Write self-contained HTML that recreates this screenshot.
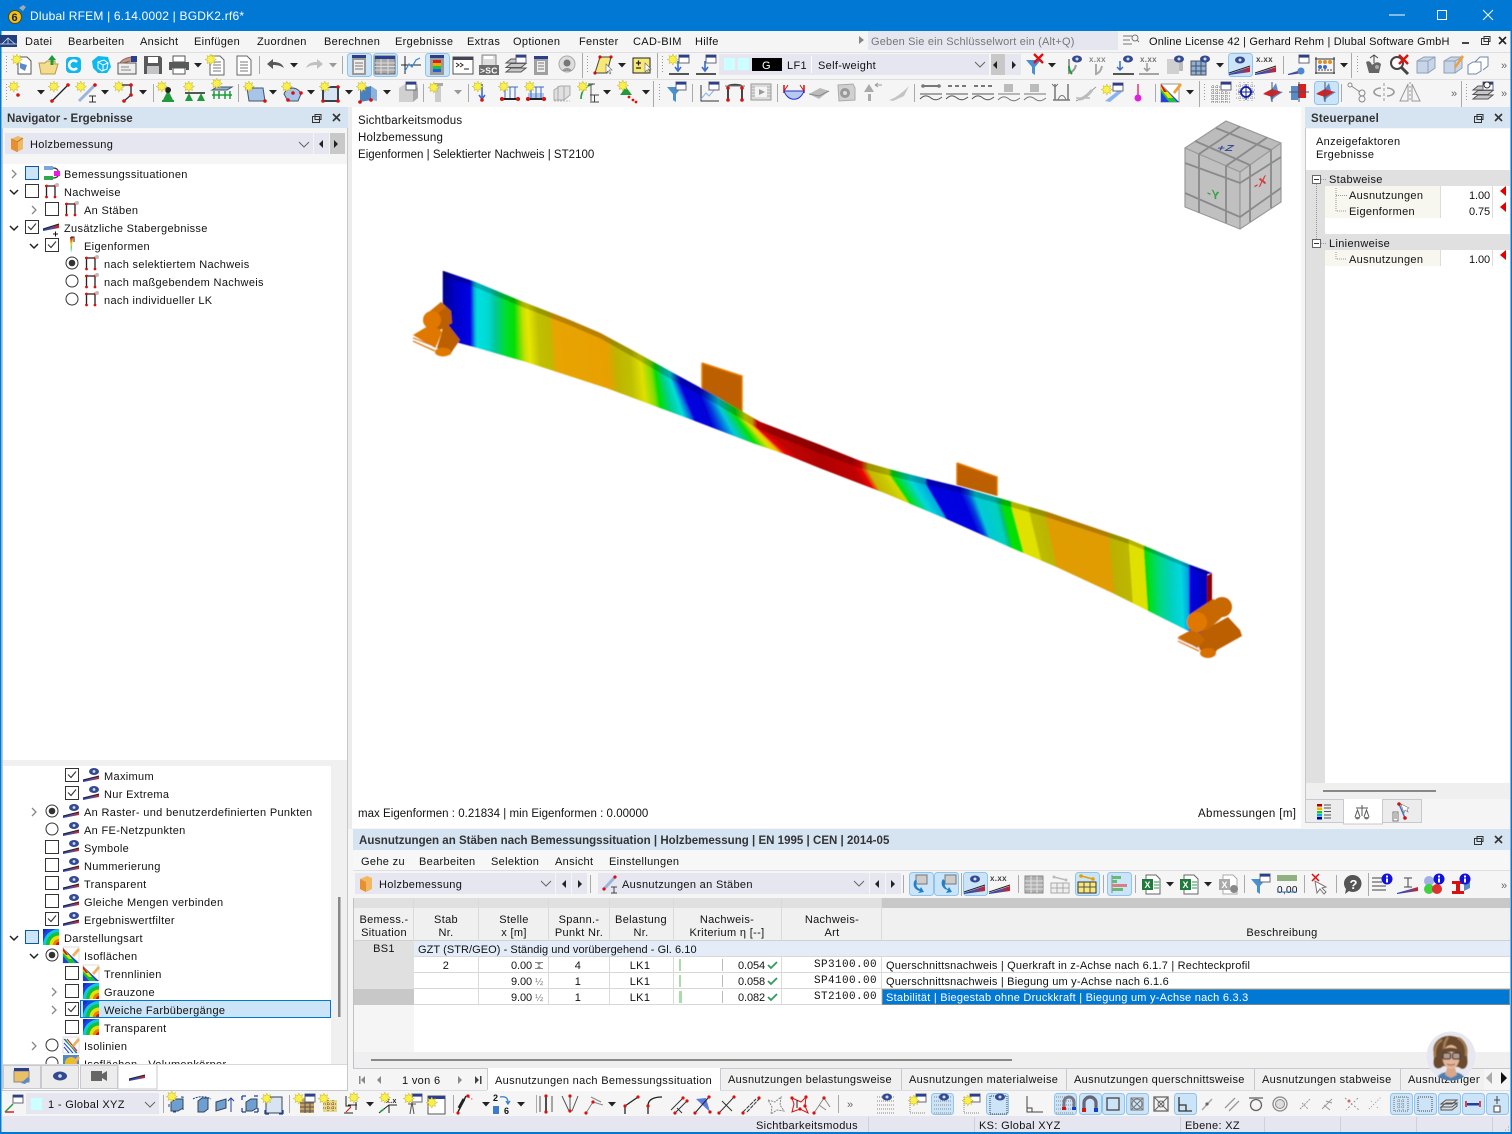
<!DOCTYPE html>
<html lang="de"><head><meta charset="utf-8"><title>Dlubal RFEM</title>
<style>
html,body{margin:0;padding:0;background:#f5f5f5}
#p{position:relative;width:1512px;height:1134px;overflow:hidden;font:11px "Liberation Sans",sans-serif;letter-spacing:.33px;color:#111}
svg.l{position:absolute;left:0;top:0}
i{position:absolute;font-style:normal;white-space:nowrap;line-height:14px;margin-top:1px}
i.c{transform:translateX(-50%)}
i.r{transform:translateX(-100%);letter-spacing:-.1px}
i.h{font-weight:bold;font-size:11.5px;color:#333;letter-spacing:.02px}
i.v{font-size:11.5px;letter-spacing:.05px}
i.m{font-family:"Liberation Mono",monospace;letter-spacing:.4px;font-size:11px}
svg text{font-family:"Liberation Sans",sans-serif}
</style></head><body><div id="p">
<svg class="l" width="1512" height="1134">
<rect width="1512" height="1134" fill="#f5f5f5"/>
<rect width="1512" height="31" fill="#0078d4"/>
<rect x="0" y="52" width="1512" height="1" fill="#dfdfdf"/><rect x="0" y="79" width="1512" height="1" fill="#dfdfdf"/>
<rect x="868" y="31" width="250" height="19" fill="#e6e6f0"/>
<rect x="719" y="54" width="270" height="21" fill="#e6e6f0"/>
<rect x="724" y="58" width="11" height="12" fill="#ccffff"/><rect x="738" y="58" width="11" height="12" fill="#ccffff"/><rect x="752" y="58" width="30" height="13" fill="#000"/>
<rect x="811" y="56" width="1" height="17" fill="#fff"/>
<rect x="991" y="54" width="14" height="21" fill="#c8c8c8"/><rect x="1005" y="54" width="16" height="21" fill="#e6e6f0"/>
<!-- nav -->
<rect x="348" y="107" width="4" height="722" fill="#ececec"/>
<rect x="2" y="107" width="346" height="21" fill="#d6e4f2"/>
<rect x="2" y="128" width="346" height="36" fill="#f5f5f5"/>
<rect x="5" y="133" width="308" height="21" fill="#e6e6f0"/><rect x="314" y="133" width="15" height="21" fill="#e6e6f0"/><rect x="330" y="133" width="15" height="21" fill="#c8c8c8"/>
<rect x="3" y="164" width="344" height="596" fill="#fff"/>
<rect x="2" y="128" width="1" height="962" fill="#c6c6cc"/><rect x="347" y="128" width="1" height="962" fill="#c6c6cc"/>
<rect x="3" y="760" width="344" height="6" fill="#f0f0f0"/>
<rect x="3" y="766" width="328" height="298" fill="#fff"/><rect x="331" y="766" width="16" height="298" fill="#f0f0f0"/>
<rect x="338" y="897" width="2.5" height="120" fill="#888"/>
<rect x="80.5" y="1000.5" width="250" height="17" fill="#cce4f7" stroke="#0078d4"/>
<rect x="2" y="1090" width="346" height="1" fill="#c6c6cc"/>
<rect x="353" y="1090" width="1157" height="1" fill="#dcdce0"/>
<!-- viewport -->
<rect x="352" y="107" width="949" height="721" fill="#fff"/>
<!-- steuerpanel -->
<rect x="1305" y="107" width="205" height="21" fill="#d6e4f2"/>
<rect x="1305" y="129" width="205" height="654" fill="#fff"/>
<rect x="1305" y="128" width="1" height="695" fill="#c6c6cc"/>
<rect x="1306" y="170" width="19" height="613" fill="#e0e0e0"/>
<rect x="1306" y="170" width="204" height="16" fill="#e0e0e0"/>
<rect x="1325" y="186" width="116" height="32" fill="#f7f7f0"/><rect x="1440" y="186" width="1" height="32" fill="#ddd"/><rect x="1492" y="186" width="1" height="32" fill="#ddd"/>
<rect x="1306" y="234" width="204" height="16" fill="#e0e0e0"/>
<rect x="1325" y="250" width="116" height="16" fill="#f7f7f0"/><rect x="1440" y="250" width="1" height="16" fill="#ddd"/><rect x="1492" y="250" width="1" height="16" fill="#ddd"/>
<rect x="1306" y="783" width="204" height="16" fill="#efefef"/>
<rect x="1323" y="790" width="113" height="2" fill="#888"/>
<!-- results -->
<rect x="353" y="829" width="1157" height="21" fill="#d6e4f2"/>
<rect x="353" y="850" width="1157" height="20" fill="#f7f7f7"/>
<rect x="353" y="870" width="1157" height="1" fill="#dfdfdf"/>
<rect x="355" y="873" width="200" height="21" fill="#e6e6f0"/><rect x="556" y="873" width="15" height="21" fill="#e6e6f0"/><rect x="572" y="873" width="15" height="21" fill="#e6e6f0"/>
<rect x="598" y="873" width="271" height="21" fill="#e6e6f0"/><rect x="870" y="873" width="15" height="21" fill="#e6e6f0"/><rect x="886" y="873" width="15" height="21" fill="#e6e6f0"/>
<rect x="354" y="898" width="1156" height="154" fill="#fff"/>
<rect x="354" y="898" width="1156" height="10" fill="#e0e0e0"/><rect x="882" y="898" width="628" height="10" fill="#c8c8c8"/>
<rect x="354" y="908" width="1156" height="33" fill="#f0f0f0"/>
<rect x="354" y="941" width="60" height="64" fill="#e0e0e0"/><rect x="354" y="989" width="60" height="16" fill="#c8c8c8"/>
<rect x="354" y="1005" width="60" height="47" fill="#f5f5f5"/>
<rect x="414" y="941" width="1096" height="16" fill="#e4ecf8"/>
<rect x="354" y="940" width="1156" height="1" fill="#d0d0d0"/>
<rect x="414" y="956" width="1096" height="1" fill="#d8d8d8"/><rect x="414" y="972" width="1096" height="1" fill="#d8d8d8"/><rect x="414" y="988" width="1096" height="1" fill="#d8d8d8"/><rect x="414" y="1004" width="1096" height="1" fill="#d8d8d8"/>
<g fill="#dadada"><rect x="413" y="898" width="1" height="43"/><rect x="478" y="898" width="1" height="43"/><rect x="548" y="898" width="1" height="43"/><rect x="609" y="898" width="1" height="43"/><rect x="673" y="898" width="1" height="43"/><rect x="781" y="898" width="1" height="43"/><rect x="881" y="898" width="1" height="43"/>
<rect x="478" y="957" width="1" height="48"/><rect x="548" y="957" width="1" height="48"/><rect x="609" y="957" width="1" height="48"/><rect x="673" y="957" width="1" height="48"/><rect x="781" y="957" width="1" height="48"/><rect x="881" y="957" width="1" height="48"/></g>
<g fill="#bbb"><rect x="722" y="959" width="1" height="12"/><rect x="722" y="975" width="1" height="12"/><rect x="722" y="991" width="1" height="12"/></g>
<g fill="#a8dca8"><rect x="679" y="959" width="2" height="12"/><rect x="679" y="975" width="2" height="12"/><rect x="679" y="991" width="3" height="12"/></g>
<rect x="882" y="989" width="628" height="16" fill="#0078d4"/>
<rect x="882.5" y="989.5" width="627" height="15" fill="none" stroke="#e8a050" stroke-dasharray="1 1"/>
<rect x="354" y="1052" width="1156" height="16" fill="#efefef"/>
<rect x="371" y="1059" width="641" height="2" fill="#888"/>
<rect x="353" y="898" width="1" height="170" fill="#c0c0c6"/>
<rect x="353" y="1068" width="1157" height="1" fill="#c8c8d0"/>
<!-- tabs -->
<rect x="487" y="1068" width="233" height="23" fill="#fff"/>
<rect x="720" y="1069" width="181" height="21" fill="#f0f0f0"/><rect x="901" y="1069" width="165" height="21" fill="#f0f0f0"/><rect x="1066" y="1069" width="188" height="21" fill="#f0f0f0"/><rect x="1254" y="1069" width="146" height="21" fill="#f0f0f0"/><rect x="1400" y="1069" width="84" height="21" fill="#f0f0f0"/>
<g fill="#c8c8d0"><rect x="487" y="1068" width="1" height="22"/><rect x="720" y="1068" width="1" height="22"/><rect x="901" y="1068" width="1" height="22"/><rect x="1066" y="1068" width="1" height="22"/><rect x="1254" y="1068" width="1" height="22"/><rect x="1400" y="1068" width="1" height="22"/></g>
<!-- bottom -->
<rect x="26" y="1093" width="133" height="21" fill="#e6e6f0"/><rect x="31" y="1098" width="11" height="12" fill="#ccffff"/>
<rect x="2" y="1116" width="1508" height="16" fill="#e6e6f0"/>
<g fill="#d0d0d8"><rect x="868" y="1117" width="1" height="15"/><rect x="974" y="1117" width="1" height="15"/><rect x="1180" y="1117" width="1" height="15"/><rect x="1264" y="1117" width="1" height="15"/><rect x="1340" y="1117" width="1" height="15"/><rect x="1416" y="1117" width="1" height="15"/><rect x="1492" y="1117" width="1" height="15"/></g>
<rect x="0" y="31" width="1.5" height="1103" fill="#0078d4"/><rect x="1510.5" y="31" width="1.5" height="1103" fill="#0078d4"/><rect x="0" y="1132" width="1512" height="2" fill="#0078d4"/>
</svg>

<i style="left:30px;top:8px;color:#fff;font-size:12px;letter-spacing:.2px">Dlubal RFEM | 6.14.0002 | BGDK2.rf6*</i>
<i style="left:25px;top:34px">Datei</i><i style="left:68px;top:34px">Bearbeiten</i><i style="left:140px;top:34px">Ansicht</i><i style="left:194px;top:34px">Einfügen</i><i style="left:257px;top:34px">Zuordnen</i><i style="left:324px;top:34px">Berechnen</i><i style="left:395px;top:34px">Ergebnisse</i><i style="left:467px;top:34px">Extras</i><i style="left:513px;top:34px">Optionen</i><i style="left:579px;top:34px">Fenster</i><i style="left:633px;top:34px">CAD-BIM</i><i style="left:695px;top:34px">Hilfe</i>
<i style="left:871px;top:34px;color:#777;letter-spacing:.18px">Geben Sie ein Schlüsselwort ein (Alt+Q)</i>
<i style="left:1149px;top:34px;letter-spacing:.17px">Online License 42 | Gerhard Rehm | Dlubal Software GmbH</i>
<i style="left:787px;top:58px">LF1</i><i style="left:818px;top:58px">Self-weight</i>
<i style="left:7px;top:111px" class="h">Navigator - Ergebnisse</i>
<i style="left:30px;top:137px">Holzbemessung</i>
<i style="left:64px;top:167px">Bemessungssituationen</i>
<i style="left:64px;top:185px">Nachweise</i>
<i style="left:84px;top:203px">An Stäben</i>
<i style="left:64px;top:221px">Zusätzliche Stabergebnisse</i>
<i style="left:84px;top:239px">Eigenformen</i>
<i style="left:104px;top:257px">nach selektiertem Nachweis</i>
<i style="left:104px;top:275px">nach maßgebendem Nachweis</i>
<i style="left:104px;top:293px">nach individueller LK</i>
<i style="left:104px;top:769px">Maximum</i>
<i style="left:104px;top:787px">Nur Extrema</i>
<i style="left:84px;top:805px">An Raster- und benutzerdefinierten Punkten</i>
<i style="left:84px;top:823px">An FE-Netzpunkten</i>
<i style="left:84px;top:841px">Symbole</i>
<i style="left:84px;top:859px">Nummerierung</i>
<i style="left:84px;top:877px">Transparent</i>
<i style="left:84px;top:895px">Gleiche Mengen verbinden</i>
<i style="left:84px;top:913px">Ergebniswertfilter</i>
<i style="left:64px;top:931px">Darstellungsart</i>
<i style="left:84px;top:949px">Isoflächen</i>
<i style="left:104px;top:967px">Trennlinien</i>
<i style="left:104px;top:985px">Grauzone</i>
<i style="left:104px;top:1003px">Weiche Farbübergänge</i>
<i style="left:104px;top:1021px">Transparent</i>
<i style="left:84px;top:1039px">Isolinien</i>
<i style="left:84px;top:1057px">Isoflächen - Volumenkörper</i>
<i style="left:48px;top:1097px">1 - Global XYZ</i>

<i class="v" style="left:358px;top:113px;letter-spacing:.22px">Sichtbarkeitsmodus</i>
<i class="v" style="left:358px;top:130px;letter-spacing:.2px">Holzbemessung</i>
<i class="v" style="left:358px;top:147px;letter-spacing:.02px">Eigenformen | Selektierter Nachweis | ST2100</i>
<i class="v" style="left:358px;top:806px;letter-spacing:.03px">max Eigenformen : 0.21834 | min Eigenformen : 0.00000</i>
<i class="v" style="left:1198px;top:806px;letter-spacing:.38px">Abmessungen [m]</i>

<i style="left:1311px;top:111px;letter-spacing:.2px" class="h">Steuerpanel</i>
<i style="left:1316px;top:134px">Anzeigefaktoren</i><i style="left:1316px;top:147px">Ergebnisse</i>
<i style="left:1329px;top:172px">Stabweise</i>
<i style="left:1349px;top:188px">Ausnutzungen</i><i class="r" style="left:1490px;top:188px">1.00</i>
<i style="left:1349px;top:204px">Eigenformen</i><i class="r" style="left:1490px;top:204px">0.75</i>
<i style="left:1329px;top:236px">Linienweise</i>
<i style="left:1349px;top:252px">Ausnutzungen</i><i class="r" style="left:1490px;top:252px">1.00</i>

<i style="left:359px;top:833px" class="h">Ausnutzungen an Stäben nach Bemessungssituation | Holzbemessung | EN 1995 | CEN | 2014-05</i>
<i style="left:361px;top:854px">Gehe zu</i><i style="left:419px;top:854px">Bearbeiten</i><i style="left:491px;top:854px">Selektion</i><i style="left:555px;top:854px">Ansicht</i><i style="left:609px;top:854px">Einstellungen</i>
<i style="left:379px;top:877px">Holzbemessung</i><i style="left:622px;top:877px">Ausnutzungen an Stäben</i>

<i class="c" style="left:384px;top:912px">Bemess.-</i><i class="c" style="left:384px;top:925px">Situation</i>
<i class="c" style="left:446px;top:912px">Stab</i><i class="c" style="left:446px;top:925px">Nr.</i>
<i class="c" style="left:514px;top:912px">Stelle</i><i class="c" style="left:514px;top:925px">x [m]</i>
<i class="c" style="left:579px;top:912px">Spann.-</i><i class="c" style="left:579px;top:925px">Punkt Nr.</i>
<i class="c" style="left:641px;top:912px">Belastung</i><i class="c" style="left:641px;top:925px">Nr.</i>
<i class="c" style="left:727px;top:912px">Nachweis-</i><i class="c" style="left:727px;top:925px">Kriterium η [--]</i>
<i class="c" style="left:832px;top:912px">Nachweis-</i><i class="c" style="left:832px;top:925px">Art</i>
<i class="c" style="left:1282px;top:925px">Beschreibung</i>
<i class="c" style="left:384px;top:941px">BS1</i>
<i style="left:418px;top:942px;letter-spacing:.06px">GZT (STR/GEO) - Ständig und vorübergehend - Gl. 6.10</i>
<i class="c" style="left:446px;top:958px">2</i><i class="r" style="left:532px;top:958px">0.00</i><i class="c" style="left:578px;top:958px">4</i><i class="c" style="left:640px;top:958px">LK1</i><i class="r" style="left:765px;top:958px">0.054</i><i class="r m" style="left:877px;top:957px">SP3100.00</i><i style="left:886px;top:958px;letter-spacing:.2px">Querschnittsnachweis | Querkraft in z-Achse nach 6.1.7 | Rechteckprofil</i>
<i class="r" style="left:532px;top:974px">9.00</i><i class="c" style="left:578px;top:974px">1</i><i class="c" style="left:640px;top:974px">LK1</i><i class="r" style="left:765px;top:974px">0.058</i><i class="r m" style="left:877px;top:973px">SP4100.00</i><i style="left:886px;top:974px;letter-spacing:.2px">Querschnittsnachweis | Biegung um y-Achse nach 6.1.6</i>
<i class="r" style="left:532px;top:990px">9.00</i><i class="c" style="left:578px;top:990px">1</i><i class="c" style="left:640px;top:990px">LK1</i><i class="r" style="left:765px;top:990px">0.082</i><i class="r m" style="left:877px;top:989px">ST2100.00</i><i style="left:886px;top:990px;color:#fff;letter-spacing:.24px">Stabilität | Biegestab ohne Druckkraft | Biegung um y-Achse nach 6.3.3</i>
<i style="left:402px;top:1073px">1 von 6</i>
<i style="left:495px;top:1073px">Ausnutzungen nach Bemessungssituation</i>
<i style="left:728px;top:1072px">Ausnutzungen belastungsweise</i>
<i style="left:909px;top:1072px">Ausnutzungen materialweise</i>
<i style="left:1074px;top:1072px">Ausnutzungen querschnittsweise</i>
<i style="left:1262px;top:1072px">Ausnutzungen stabweise</i>
<i style="left:1408px;top:1072px;width:72px;overflow:hidden">Ausnutzungen stab</i>
<i style="left:756px;top:1118px">Sichtbarkeitsmodus</i><i style="left:979px;top:1118px">KS: Global XYZ</i><i style="left:1185px;top:1118px">Ebene: XZ</i>

<svg class="l" width="1512" height="1134">
<defs>
<linearGradient id="wg"><stop offset="0" stop-color="#1f3fae"/><stop offset=".55" stop-color="#5a4a9a"/><stop offset="1" stop-color="#d02020"/></linearGradient>
<linearGradient id="rbw" x1="0" y1="1" x2="0" y2="0"><stop offset="0" stop-color="#1060e0"/><stop offset=".3" stop-color="#10c060"/><stop offset=".55" stop-color="#e8e000"/><stop offset=".8" stop-color="#e07000"/><stop offset="1" stop-color="#d01010"/></linearGradient>
<filter id="sf1"><feGaussianBlur stdDeviation=".45"/></filter>
<g id="ar"><path d="M7 9h8l-4 4.500z" fill="#222"/></g>
<g id="ag"><path d="M7 9h8l-4 4.500z" fill="#999"/></g>
<g id="st" transform="scale(.8)"><path d="M6 0l1.400 3.200 3.400-1.200-1.200 3.400L13 7 9.600 8.400l1.200 3.400-3.400-1.200L6 14l-1.400-3.400L1.200 11.800l1.200-3.400L-1 7l3.400-1.600L1.200 2l3.400 1.200z" fill="#faf04a" stroke="#bfae30" stroke-width=".6"/></g>
<g id="wn"><rect x="11" y="1" width="10" height="8" fill="#fff" stroke="#667"/><rect x="11" y="1" width="10" height="2.600" fill="#2b3f8c"/></g>
<g id="ey"><ellipse cx="15" cy="5" rx="5" ry="3.500" fill="#34498f"/><circle cx="15" cy="5" r="1.500" fill="#cfe0ff"/></g>
<g id="nd"><path d="M6 3h9l4 4v13H6z" fill="#fff" stroke="#555"/><path d="M8 9l7 2-2 6-5-3z" fill="#5a8ac8"/><use href="#st"/></g>
<g id="fo"><path d="M1 9h6l2-2h8v3h3l-3 10H3z" fill="#f5dc8c" stroke="#b09a50"/><path d="M14 1l4 5h-2.500v5h-3V6H10z" fill="#1f9a3c"/></g>
<g id="cc"><rect x="3" y="3" width="15" height="16" rx="4" fill="#10b8ee"/><path d="M14 8a4.500 4.500 0 1 0 0 6" fill="none" stroke="#fff" stroke-width="2.600"/></g>
<g id="cb"><path d="M2 7l6-5 10 1 3 10-4 6H8l-5-5z" fill="#10b8ee"/><path d="M8 8l6-2 4 3-1 6-5 2-4-3zM8 8l5 3 5-2M13 11v6" fill="none" stroke="#fff"/></g>
<g id="hb"><rect x="2" y="9" width="18" height="11" fill="#eee" stroke="#555"/><path d="M5 13h8M5 16h10" stroke="#888"/><path d="M4 9c2-4 7-5 11-6l1 4c-4 0-7 2-9 2z" fill="#c89878" stroke="#866"/><rect x="15" y="2" width="6" height="6" fill="#2b3f8c"/></g>
<g id="fl"><path d="M2 2h16l2 2v16H2z" fill="#58595b"/><rect x="6" y="3" width="10" height="6" fill="#fff"/><rect x="5" y="12" width="12" height="8" fill="#c4c4c4"/></g>
<g id="pt"><rect x="5" y="2" width="12" height="6" fill="#fff" stroke="#555"/><path d="M1 8h20v8h-3v-2H4v2H1z" fill="#58595b"/><rect x="5" y="14" width="12" height="6" fill="#fff" stroke="#555"/></g>
<g id="dc"><path d="M4 2h10l4 4v15H4z" fill="#fff" stroke="#666"/><path d="M7 8h8M7 11h8M7 14h8M7 17h8" stroke="#777"/></g>
<g id="ds"><use href="#dc"/><use href="#st"/></g>
<g id="un"><path d="M3 10l6-5v3c5 0 9 1 11 6-3-2-6-3-11-3v4z" fill="#58595b"/></g>
<g id="re"><path d="M19 10l-6-5v3c-5 0-9 1-11 6 3-2 6-3 11-3v4z" fill="#c0c0c0"/></g>
<g id="tl"><rect x="4" y="1" width="14" height="20" fill="#9a9a9a"/><rect x="4" y="1" width="14" height="3" fill="#2b3f8c"/><rect x="6" y="6" width="10" height="13" fill="#eee"/><path d="M7 9h8M7 12h8M7 15h8" stroke="#777"/></g>
<g id="tg"><rect x="1" y="2" width="20" height="18" fill="#a8a8a8" stroke="#666"/><rect x="1" y="2" width="20" height="3" fill="#2b3f8c"/><path d="M1 9h20M1 12.500h20M1 16h20M7 5v15M14 5v15" stroke="#ddd"/></g>
<g id="ch"><path d="M5 2v18M1 11h20" stroke="#222" fill="none"/><path d="M5 17l4-7 3 3 4-7 4-2" stroke="#3a86d0" stroke-width="1.200" fill="none"/></g>
<g id="tc"><rect x="4" y="1" width="14" height="20" fill="#9a9a9a"/><rect x="4" y="1" width="14" height="3" fill="#2b3f8c"/><rect x="7" y="6" width="8" height="3" fill="#d82020"/><rect x="7" y="9" width="8" height="3" fill="#e8b000"/><rect x="7" y="12" width="8" height="3" fill="#20c040"/><rect x="7" y="15" width="8" height="3" fill="#2060e0"/></g>
<g id="co"><rect x="1" y="3" width="20" height="17" fill="#fff" stroke="#555"/><rect x="1" y="3" width="20" height="3" fill="#445"/><path d="M4 9l3 2-3 2M8 9l3 2-3 2M12 15h5" stroke="#222" fill="none"/></g>
<g id="sc"><rect x="4" y="1" width="14" height="11" fill="#ddd" stroke="#888"/><rect x="6" y="2" width="9" height="3" fill="#fff"/><rect x="1" y="11" width="20" height="10" fill="#6c6c6c"/><text x="2" y="19.500" font-size="8.500" font-weight="bold" fill="#fff">&gt;SC</text></g>
<g id="ly"><path d="M1 18l5-4h15l-5 4zM1 13.500l5-4h15l-5 4zM1 9l5-4h5v4z" fill="#c8c8c8" stroke="#555"/><use href="#wn"/></g>
<g id="dl"><rect x="4" y="2" width="14" height="19" fill="#a0a0a0"/><rect x="4" y="2" width="14" height="3" fill="#2b3f8c"/><rect x="7" y="7" width="8" height="11" fill="#eee"/><path d="M8 9h6M8 12h6M8 15h6" stroke="#777"/></g>
<g id="hd"><circle cx="11" cy="10" r="8" fill="#ddd" stroke="#aaa"/><circle cx="11" cy="9" r="3.500" fill="#777"/><path d="M6 17c2-4 8-4 10 0" fill="#999"/></g>
<g id="yp"><path d="M7 3h11l-4 16H2z" fill="#f8e878" stroke="#444"/><circle cx="7" cy="3" r="1.600" fill="#d01010"/><circle cx="18" cy="3" r="1.600" fill="#d01010"/><circle cx="2" cy="19" r="1.600" fill="#d01010"/><path d="M13 10v9l2-2 2 3 1-1-2-3h3z" fill="#fff" stroke="#666" stroke-width=".6"/></g>
<g id="yb"><rect x="2" y="4" width="17" height="15" fill="#f8e878" stroke="#222"/><path d="M5 9h5M7.500 6.500v5M5 14h5" stroke="#222" stroke-width="1.300"/><path d="M14 9v9l2-2 2 3 1-1-2-3h3z" fill="#fff" stroke="#666" stroke-width=".6"/></g>
<g id="lb"><use href="#wn"/><path d="M10 7v10M7 13l3 4 3-4" stroke="#3a6cc8" stroke-width="1.600" fill="none"/><path d="M1 20h20" stroke="#222" stroke-width="1.600"/></g>
<g id="la"><use href="#lb"/><use href="#st"/></g>
<g id="fn"><path d="M2 6h15l-6 7v8l-3-2v-6z" fill="#4a90d0"/></g>
<g id="fw"><use href="#fn"/><use href="#wn"/></g>
<g id="fx"><use href="#fn"/><path d="M10 0l9 9M19 0l-9 9" stroke="#e01010" stroke-width="2.400"/></g>
<g id="ge"><use href="#ey"/><path d="M7 5v14c3-1 6-3 7-8" fill="none" stroke="#999" stroke-width="2"/><path d="M7 12c0 5 2 7 3 8" fill="none" stroke="#1f9a3c" stroke-width="2"/></g>
<g id="gx"><text x="1" y="8" font-size="8" font-weight="bold" fill="#888">x.xx</text><path d="M8 10v10c3-1 5-3 6-8" fill="none" stroke="#aaa" stroke-width="2"/></g>
<g id="eb"><use href="#ey"/><path d="M7 7v9M4 13l3 3 3-3" stroke="#3a6cc8" stroke-width="1.500" fill="none"/><path d="M0 20h21" stroke="#222" stroke-width="1.600"/></g>
<g id="xb"><text x="1" y="8" font-size="8" font-weight="bold" fill="#777">x.xx</text><path d="M8 9v8M5 14l3 3 3-3" stroke="#999" stroke-width="1.500" fill="none"/><path d="M0 20h20" stroke="#888" stroke-width="1.600"/></g>
<g id="gc"><path d="M3 5h12v15H3z" fill="#d0d0d0"/><path d="M15 5h4v12h-4z" fill="#bbb"/><use href="#ey"/></g>
<g id="tb"><rect x="1" y="7" width="15" height="14" fill="#8fb0d8" stroke="#555"/><path d="M1 12h15M1 17h15M6 7v14M11 7v14" stroke="#456"/><use href="#ey"/></g>
<g id="rb"><path d="M0 20l21-7v5L0 21z" fill="url(#wg)"/><path d="M0 19l21-7" stroke="#222"/><use href="#ey" transform="translate(-4 1)"/></g>
<g id="xw"><text x="1" y="8" font-size="8" font-weight="bold" fill="#444">x.xx</text><path d="M0 20l21-7v5L0 21z" fill="url(#wg)"/><path d="M0 19l21-7" stroke="#222"/></g>
<g id="wg2"><path d="M0 20l16-5v4L0 21z" fill="url(#wg)"/><use href="#wn"/><circle cx="13" cy="17" r="3.500" fill="#4a8ad0"/></g>
<g id="ab"><path d="M1 5h20M1 19h20M2 3v17M20 3v17" stroke="#333" fill="none"/><g fill="#e09020"><circle cx="6" cy="8" r="2"/><circle cx="11" cy="8" r="2"/><circle cx="16" cy="8" r="2"/></g><g fill="#3a6cc8"><circle cx="6" cy="13" r="2"/><circle cx="11" cy="13" r="2"/></g><path d="M4 16h14" stroke="#444" stroke-dasharray="2 1"/></g>
<g id="hs"><path d="M3 8c3-2 5 0 6 3 3-3 6-4 9-1l-2 9H6z" fill="#666"/><path d="M11 1v8M7 4l4-3 4 3" fill="none" stroke="#444"/><circle cx="14" cy="13" r="2" fill="#aaa"/></g>
<g id="mx"><circle cx="8" cy="9" r="6" fill="#fff" stroke="#444" stroke-width="2"/><path d="M12 13l7 7" stroke="#444" stroke-width="3"/><path d="M10 1l9 9M19 1l-9 9" stroke="#e01010" stroke-width="2.400"/></g>
<g id="cu"><path d="M2 7l7-4h11v11l-7 5H2z" fill="#c8d4e8" stroke="#8fa0b8"/><path d="M2 7h11v12M13 7l7-4" fill="none" stroke="#8fa0b8"/></g>
<g id="cp"><use href="#cu"/><path d="M12 13L20 1l2 2-8 11z" fill="#f0a030"/></g>
<g id="c2"><path d="M1 11l5-3h8v9l-5 3H1zM8 8l5-5h8v9l-5 4" fill="#fff" stroke="#7088a8"/></g>
<!-- row2 -->
<g id="rd1"><circle cx="9" cy="14" r="1.800" fill="#d81010"/><use href="#st"/></g>
<g id="sl"><path d="M3 20L19 4" stroke="#222" stroke-width="1.300"/><circle cx="3" cy="20" r="1.800" fill="#d81010"/><circle cx="19" cy="4" r="1.800" fill="#d81010"/><use href="#st"/></g>
<g id="si"><path d="M3 20L19 4" stroke="#9db4dc" stroke-width="3"/><circle cx="19" cy="4" r="1.800" fill="#d81010"/><path d="M13 15h7M16.500 15v6M13 21h7" stroke="#333"/><use href="#st"/></g>
<g id="sp"><path d="M6 4h11v10l-7 6" fill="none" stroke="#222" stroke-width="1.300"/><circle cx="17" cy="4" r="1.800" fill="#d81010"/><circle cx="17" cy="14" r="1.800" fill="#d81010"/><circle cx="10" cy="20" r="1.800" fill="#d81010"/><use href="#st"/></g>
<g id="n1"><path d="M11 9l5 10H6z" fill="#1f9a3c"/><circle cx="11" cy="9" r="3" fill="#222"/><rect x="5" y="19" width="12" height="2" fill="#1f9a3c"/><use href="#st"/></g>
<g id="n2"><path d="M1 12h20" stroke="#222" stroke-width="1.500"/><path d="M5 12l4 8H1zM17 12l4 8h-8z" fill="#1f9a3c"/><use href="#st"/></g>
<g id="n3"><path d="M1 9l5-3h15l-5 3z" fill="#8fb0d8" stroke="#456"/><path d="M3 10v8M8 10v8M14 10v8M19 10v8M1 14h20" stroke="#1f9a3c" stroke-width="1.500"/><use href="#st" transform="translate(1 -3)"/></g>
<g id="sq"><path d="M3 7h16l2 13H5z" fill="#a8c4e8" stroke="#456"/><circle cx="21" cy="20" r="1.800" fill="#d81010"/><circle cx="3" cy="7" r="1.800" fill="#d81010"/><use href="#st"/></g>
<g id="sh"><path d="M2 13a9 9 0 0 1 17 0l-3 7H6z" fill="#a8c4e8" stroke="#456"/><circle cx="6" cy="19" r="1.800" fill="#d81010"/><circle cx="19" cy="12" r="1.800" fill="#d81010"/><circle cx="11" cy="12" r="1.800" fill="#d81010"/><use href="#st"/></g>
<g id="sf"><rect x="3" y="6" width="15" height="14" fill="#d8e4f4" stroke="#345" stroke-width="2"/><circle cx="3" cy="6" r="1.800" fill="#d81010"/><circle cx="18" cy="6" r="1.800" fill="#d81010"/><circle cx="3" cy="20" r="1.800" fill="#d81010"/><circle cx="18" cy="20" r="1.800" fill="#d81010"/><use href="#st"/></g>
<g id="sb"><path d="M3 8l11-3v14L3 21z" fill="#4a80c0"/><path d="M14 5l6 4v11l-6-1z" fill="#8fb0d8"/><circle cx="3" cy="21" r="1.800" fill="#d81010"/><circle cx="14" cy="19" r="1.800" fill="#d81010"/><use href="#st"/></g>
<g id="gb"><path d="M2 7l6-4h13v3l-5 3v12H2z" fill="#d0d0d0"/><path d="M16 9v12l5-4V6z" fill="#aaa"/><use href="#wn" transform="translate(-2 0)"/></g>
<g id="gk"><path d="M8 4h6v17H8z" fill="#ccc"/><path d="M6 2h10v3H6z" fill="#aaa"/><use href="#st" transform="translate(2 1)"/></g>
<g id="sk"><path d="M11 3v16M8 14l3 4 3-4" stroke="#3a6cc8" stroke-width="1.600" fill="none"/><circle cx="11" cy="19" r="1.800" fill="#d81010"/><use href="#st" transform="translate(2 0)"/></g>
<g id="fl1"><path d="M1 18h20M3 6h16M6 6v11M11 6v11M16 6v11" stroke="#3a6cc8" fill="none"/><path d="M1 18h20" stroke="#222" stroke-width="2"/><circle cx="3" cy="18" r="2" fill="#d81010"/><circle cx="19" cy="18" r="2" fill="#d81010"/><use href="#st"/></g>
<g id="fl2"><rect x="3" y="12" width="16" height="6" fill="#b0c8e8"/><use href="#fl1"/></g>
<g id="fl3"><path d="M3 9l6-4h10v9l-6 5H3z" fill="#e0e0e0" stroke="#aaa"/><path d="M7 5v14M13 5v14" stroke="#aaa"/><path d="M3 20h16" stroke="#bbb" stroke-dasharray="2 1"/></g>
<g id="gi"><path d="M3 18C3 9 8 5 15 3" fill="none" stroke="#1f9a3c" stroke-width="1.600"/><path d="M13 3v17M10 3h7" stroke="#555"/><path d="M12 14h9M16.500 14v7M12 21h9" stroke="#444"/><use href="#st"/></g>
<g id="gs"><path d="M11 6l6 8H5z" fill="#1f9a3c"/><circle cx="14" cy="16" r="1.400" fill="#d81010"/><circle cx="18" cy="19" r="1.400" fill="#d81010"/><circle cx="21" cy="21" r="1.400" fill="#d81010"/><use href="#st" transform="translate(3 -1)"/></g>
<g id="cw"><path d="M3 4v16h18" stroke="#333" fill="none"/><path d="M3 18l5-6 3 3 6-7" stroke="#8ab4e0" fill="none"/><use href="#wn"/></g>
<g id="rf"><path d="M4 20V6c0-3 14-3 14 0v14" fill="none" stroke="#444" stroke-width="2"/><path d="M1 5h20" stroke="#777"/><circle cx="4" cy="19" r="1.800" fill="#d81010"/><circle cx="18" cy="19" r="1.800" fill="#d81010"/><circle cx="4" cy="7" r="1.800" fill="#d81010"/><circle cx="18" cy="7" r="1.800" fill="#d81010"/></g>
<g id="fm"><rect x="1" y="3" width="20" height="16" fill="#ddd" stroke="#999"/><rect x="5" y="6" width="12" height="10" fill="#f4f4f4"/><path d="M9 8l6 3-6 3z" fill="#999"/><path d="M1 6h4M1 9h4M1 12h4M1 15h4M17 6h4M17 9h4M17 12h4M17 15h4" stroke="#aaa"/></g>
<g id="mm"><path d="M1 4v8M21 4v8" stroke="#d81010" stroke-width="1.500"/><path d="M1 10C5 21 17 21 21 10z" fill="#b8c8ee" stroke="#2030d0"/><path d="M1 10l4-6M21 10l-4-6" stroke="#d81010"/></g>
<g id="gf"><path d="M1 13l11-6 9 3-10 8z" fill="#bbb"/><path d="M1 13l10 2 10-5" fill="none" stroke="#888"/></g>
<g id="gy"><path d="M3 4l15-1 2 4v12l-16 1z" fill="#d0d0d0" stroke="#aaa"/><circle cx="10" cy="12" r="5" fill="#999"/><circle cx="10" cy="12" r="2" fill="#ddd"/></g>
<g id="gu"><path d="M8 3l5 8H3zM7 13h3v7H7z" fill="#aaa"/><path d="M14 4h7M14 4l3-2M14 4l3 2" stroke="#999" fill="none"/></g>
<g id="gl"><path d="M1 19C8 17 15 11 21 5L16 15 5 20z" fill="#c4c4c4"/></g>
<g id="bm"><path d="M2 5h18" stroke="#777" stroke-width="2"/><circle cx="3" cy="5" r="1.800" fill="#777"/><circle cx="19" cy="5" r="1.800" fill="#777"/><path d="M0 13h22M0 18c4-4 7-4 11-1s7 2 11-1" stroke="#555" fill="none"/></g>
<g id="bd"><path d="M2 5h18" stroke="#777" stroke-width="2" stroke-dasharray="4 3"/><path d="M0 13h22M0 18c4-4 7-4 11-1s7 2 11-1" stroke="#555" fill="none"/></g>
<g id="be"><path d="M6 3h9v8H6z" fill="#bbb"/><path d="M0 13h22M0 19c4-4 7-4 11-1s7 2 11-1" stroke="#777" fill="none"/></g>
<g id="bu"><path d="M5 3v16M18 3v16M3 19h17" stroke="#777" stroke-width="1.500" fill="none"/><path d="M8 19c2-6 6-6 8 0" stroke="#777" fill="none"/><path d="M8 3l-3 3-3-3" stroke="#777" fill="none"/></g>
<g id="bg"><path d="M1 20C8 17 15 11 21 6M1 17h14" stroke="#999" fill="none"/><path d="M4 18c5 0 9-4 13-9" stroke="#bbb" stroke-width="3" fill="none"/></g>
<g id="lo"><path d="M3 20L17 9l3 2-12 10z" fill="#8ab4ee"/><use href="#wn" transform="translate(0 1)"/><use href="#st" transform="translate(0 3)"/></g>
<g id="pk"><path d="M11 3v13" stroke="#e83080" stroke-width="1.500"/><circle cx="11" cy="17" r="3.500" fill="#e020e0"/></g>
<g id="rw"><rect x="1" y="3" width="18" height="18" fill="#fff" stroke="#999"/><path d="M1 3l18 18H1z" fill="#2040e0"/><path d="M1 3l16 18h-8L1 11z" fill="#20c040"/><path d="M1 3l12 14H8L1 8z" fill="#f0e000"/><path d="M1 3l6 8H4L1 5z" fill="#e01010"/><path d="M13 11l7-9 2 2-7 9z" fill="#f0a030"/></g>
<g id="gd"><use href="#wn"/><path d="M1 6h9M1 9h9M1 12h20M1 15h20M1 18h20M1 21h20M3 4v18M7 4v18M12 10v12M16 10v12" stroke="#777" stroke-dasharray="1 1"/></g>
<g id="cg"><path d="M1 5h20M1 9h20M1 13h20M1 17h20M5 1v20M9 1v20M13 1v20M17 1v20" stroke="#999" stroke-dasharray="1 1"/><circle cx="11" cy="11" r="5" fill="#fff" stroke="#1020a0" stroke-width="1.800"/><path d="M11 3v16M3 11h16" stroke="#1020a0"/></g>
<g id="pl"><path d="M2 12l8-4 4-6 2 8 5 1-8 5-4 4-1-6z" fill="#5a8ac8"/><path d="M1 13l9-5 9 3-9 5z" fill="#d82020"/><path d="M10 1v20" stroke="#456"/></g>
<g id="pr"><path d="M3 5h7v14H3z" fill="#5a8ac8"/><path d="M10 3h8v14h-8z" fill="#d82020"/><path d="M1 11l20 0M11 1v20" stroke="#456"/></g>
<g id="nl"><path d="M3 4l10 7" stroke="#888"/><circle cx="3" cy="4" r="2" fill="#fff" stroke="#888"/><circle cx="15" cy="12" r="3" fill="none" stroke="#888"/><circle cx="15" cy="18" r="3" fill="none" stroke="#888"/></g>
<g id="rt"><path d="M11 2v18" stroke="#999" stroke-dasharray="3 2"/><path d="M8 7c-4 0-7 2-7 4s3 4 7 4M14 7c4 0 7 2 7 4s-3 4-7 4" fill="none" stroke="#999" stroke-width="1.600"/></g>
<g id="mr"><path d="M9 3v17H1zM13 3v17h8z" fill="none" stroke="#999"/><path d="M11 1v20" stroke="#999" stroke-dasharray="2 2"/></g>
<g id="st3"><use href="#ly"/><circle cx="15" cy="4" r="3" fill="#fff" stroke="#333"/></g>
<!-- results icons -->
<g id="rx1"><rect x="6" y="2" width="11" height="9" fill="#ccc" stroke="#777"/><path d="M5 7c-3 4-1 10 5 11l-2 2 6-1-3-5-1 2c-3-1-5-4-3-8" fill="#1f7fc8"/></g>
<g id="rx2"><rect x="10" y="2" width="11" height="9" fill="#ccc" stroke="#777"/><path d="M8 6c-3 4-1 10 5 11l-2 3 6-1-3-5-1 2c-3-1-4-5-3-8" fill="#1f7fc8"/></g>
<g id="t1"><rect x="2" y="3" width="18" height="17" fill="#b0b0b0" stroke="#888"/><path d="M2 8h18M2 12h18M2 16h18M8 3v17M14 3v17" stroke="#e0e0e0"/></g>
<g id="t2"><rect x="2" y="10" width="18" height="10" fill="#eee" stroke="#aaa"/><path d="M2 15h18M8 10v10M14 10v10" stroke="#aaa"/><path d="M5 4l12 3" stroke="#bbb" stroke-width="1.500"/><circle cx="5" cy="4" r="1.500" fill="#bbb"/><circle cx="17" cy="7" r="1.500" fill="#bbb"/></g>
<g id="t3"><rect x="2" y="9" width="18" height="11" fill="#f8e878" stroke="#333"/><path d="M2 14h18M8 9v11M14 9v11" stroke="#555"/><path d="M5 3l12 3" stroke="#e0a000" stroke-width="1.500"/><circle cx="5" cy="3" r="1.800" fill="#e0a000"/><circle cx="17" cy="6" r="1.800" fill="#e0a000"/></g>
<g id="gn"><path d="M4 2v18" stroke="#888"/><rect x="4" y="3" width="9" height="3" fill="#68b878"/><rect x="4" y="7" width="5" height="3" fill="#68b878"/><rect x="4" y="11" width="15" height="3" fill="#d88080"/><rect x="4" y="15" width="11" height="3" fill="#68b878"/></g>
<g id="xl"><path d="M5 2h10l4 4v15H5z" fill="#fff" stroke="#666"/><rect x="1" y="6" width="11" height="11" fill="#1f7a3c"/><text x="3.500" y="15" font-size="9" font-weight="bold" fill="#fff">X</text><path d="M13 9h5M13 12h5M13 15h5" stroke="#2a9a50"/></g>
<g id="xg"><path d="M5 2h10l4 4v15H5z" fill="#fff" stroke="#aaa"/><rect x="1" y="6" width="11" height="11" fill="#aaa"/><text x="3.500" y="15" font-size="9" font-weight="bold" fill="#fff">X</text><circle cx="16" cy="16" r="4" fill="#888"/></g>
<g id="nu"><text x="1" y="20" font-size="10" fill="#111">0,00</text><rect x="1" y="2" width="20" height="6" fill="#90b080"/><path d="M1 19h20" stroke="#2a70c8"/></g>
<g id="xc"><path d="M6 8l2 12 3-4 4 5 2-2-4-4 4-1z" fill="#fff" stroke="#777"/><path d="M3 1l7 7M10 1L3 8" stroke="#e01010" stroke-width="1.500"/></g>
<g id="qm"><path d="M11 2a8.500 8.500 0 1 1-4 16l-4 3 1-5A8.500 8.500 0 0 1 11 2z" fill="#555"/><text x="7.500" y="16" font-size="13" font-weight="bold" fill="#fff">?</text></g>
<g id="in"><circle cx="16" cy="6" r="5.500" fill="#1010e0"/><rect x="15" y="2.500" width="2" height="2" fill="#fff"/><rect x="15" y="5.500" width="2" height="4" fill="#fff"/></g>
<g id="i1"><path d="M1 5h10M1 9h10M1 13h14M1 17h14" stroke="#444"/><use href="#in"/></g>
<g id="i2"><path d="M0 20l21-6v4L0 21z" fill="url(#wg)"/><path d="M7 5h8M11 5v9M7 14h8" stroke="#444"/></g>
<g id="i3"><circle cx="6" cy="8" r="5" fill="#a0b0e8"/><circle cx="6" cy="16" r="5" fill="#40d040"/><circle cx="14" cy="16" r="5" fill="#e03030"/><use href="#in"/></g>
<g id="i4"><path d="M3 8h12v3H11v7h4v3H3v-3h4v-7H3z" fill="#d81010"/><path d="M15 8l6-3v10l-6 3z" fill="#5a8ac8"/><use href="#in"/></g>
<!-- bottom -->
<g id="ax"><path d="M3 19h9" stroke="#d81010" stroke-width="1.400"/><path d="M3 19l8-8" stroke="#1f9a3c" stroke-width="1.400"/><rect x="11" y="2" width="10" height="8" fill="#fff" stroke="#667"/><rect x="11" y="2" width="10" height="2.500" fill="#2b3f8c"/></g>
<g id="b1"><rect x="3" y="4" width="14" height="15" fill="none" stroke="#2040a0" stroke-dasharray="3 9"/><path d="M5 9l5-3h7v9l-5 3H5z" fill="#6f9ed0" stroke="#345"/><use href="#st" transform="translate(1 -2)"/></g>
<g id="b2"><path d="M7 8l4-3h6v11l-4 3H7z" fill="#6f9ed0" stroke="#345"/><path d="M2 6c5-3 13-3 18 0" fill="none" stroke="#2040a0" stroke-dasharray="2 1"/></g>
<g id="b3"><path d="M2 9l10-3v9L2 18z" fill="#6f9ed0" stroke="#345"/><path d="M17 5v14M14 8l3-3 3 3" stroke="#2040a0" fill="none"/></g>
<g id="b4"><path d="M7 9l5-3h6v9l-5 3H7z" fill="#6f9ed0" stroke="#345"/><path d="M3 3h4M3 3v4M19 3h-4M3 19h4M3 19v-4M19 19h-4M19 19v-4" stroke="#2040a0" fill="none" stroke-width="1.300"/></g>
<g id="b5"><rect x="4" y="4" width="16" height="16" fill="#d8e4f4" stroke="#345"/><path d="M3 3h4M3 3v4M3 21h4M3 21v-4M21 21h-4M21 21v-4" stroke="#2040a0" fill="none" stroke-width="1.300"/><use href="#st"/></g>
<g id="b6"><rect x="6" y="6" width="14" height="14" fill="#c8a060"/><path d="M6 10h14M6 14h14M6 18h14M11 6v14M16 6v14" stroke="#555"/><use href="#wn"/><use href="#st"/></g>
<g id="b7"><rect x="4" y="7" width="14" height="12" fill="#dd8"/><path d="M4 11h14M4 15h14M9 7v12M14 7v12" stroke="#a33" stroke-dasharray="1 1"/><use href="#st"/></g>
<g id="b8"><path d="M3 3v10h5M1 20h9" stroke="#222" fill="none"/><path d="M5 12h9M13 9v8" stroke="#222"/><path d="M3 19l5-5" stroke="#d81010"/><use href="#st" transform="translate(6 -1)"/></g>
<g id="b9"><path d="M3 20l10-8h8M13 12v8" stroke="#222" fill="none"/><path d="M4 19l4-3" stroke="#1f9a3c" stroke-width="1.600"/><text x="10" y="10" font-size="7" font-weight="bold" fill="#222">x.x</text><use href="#st" transform="translate(4 -1)"/></g>
<g id="b10"><path d="M11 9l-2 12M11 9l2 12M7 11l8 0" stroke="#555"/><use href="#wn"/><use href="#st" transform="translate(3 0)"/></g>
<g id="b11"><rect x="3" y="3" width="17" height="18" fill="#fff" stroke="#555"/><rect x="3" y="3" width="17" height="3" fill="#2b3f8c"/><use href="#st" transform="translate(2 4)"/></g>
<g id="b12"><path d="M11 3L3 19" stroke="#222" stroke-width="1.400"/><path d="M11 3l8 4" stroke="#d81010" stroke-dasharray="1 2"/><path d="M9 6l-5 9" stroke="#222" stroke-width="3"/><circle cx="13" cy="3" r="1.600" fill="#d81010"/><circle cx="3" cy="20" r="1.600" fill="#d81010"/></g>
<g id="b13"><text x="1" y="8" font-size="9" font-weight="bold" fill="#111">2</text><rect x="1" y="13" width="6" height="8" fill="#3a7cc8"/><text x="12" y="21" font-size="9" font-weight="bold" fill="#111">6</text><path d="M8 4c6-1 8 1 8 6M14 8l2 3 2-3" stroke="#3a7cc8" fill="none" stroke-width="1.300"/></g>
<g id="l1"><path d="M5 3v16M11 3v16M17 3v16" stroke="#555"/><path d="M11 3v16" stroke="#222" stroke-width="1.600"/><circle cx="11" cy="3" r="1.600" fill="#d81010"/><circle cx="11" cy="19" r="1.600" fill="#d81010"/></g>
<g id="l2"><path d="M3 3l7 15M11 3v15M19 3l-6 15" stroke="#555" fill="none"/><circle cx="11" cy="3" r="1.600" fill="#d81010"/><circle cx="11" cy="18" r="1.600" fill="#d81010"/></g>
<g id="l3"><path d="M3 20L10 9l10 3M8 4l10 5" stroke="#888" fill="none"/><circle cx="3" cy="20" r="1.600" fill="#d81010"/><circle cx="10" cy="9" r="1.600" fill="#d81010"/></g>
<g id="l4"><path d="M4 21v-8M4 13L17 4" stroke="#222" stroke-width="1.300"/><circle cx="17" cy="4" r="1.600" fill="#d81010"/><circle cx="4" cy="13" r="1.600" fill="#d81010"/></g>
<g id="l5"><path d="M4 21v-8C4 7 9 4 18 4" stroke="#222" stroke-width="1.300" fill="none"/><circle cx="4" cy="13" r="1.600" fill="#d81010"/></g>
<g id="l6"><path d="M3 17L15 5M7 20L19 8M9 15l5 5" stroke="#333"/><circle cx="15" cy="5" r="1.600" fill="#d81010"/><circle cx="7" cy="20" r="1.600" fill="#d81010"/><circle cx="19" cy="8" r="1.600" fill="#d81010"/></g>
<g id="l7"><path d="M4 6l14 13-4-14z" fill="#5a7ae0"/><path d="M3 20L17 4" stroke="#222"/><circle cx="17" cy="4" r="1.600" fill="#d81010"/><circle cx="3" cy="20" r="1.600" fill="#d81010"/><circle cx="18" cy="19" r="1.600" fill="#d81010"/></g>
<g id="l8"><path d="M3 20L18 4M6 8l10 10" stroke="#333"/><circle cx="18" cy="4" r="1.600" fill="#d81010"/><circle cx="3" cy="20" r="1.600" fill="#d81010"/></g>
<g id="l9"><path d="M3 19L16 6M7 19L19 6" stroke="#333" stroke-dasharray="4 1"/><circle cx="19" cy="5" r="1.600" fill="#d81010"/><circle cx="3" cy="20" r="1.600" fill="#d81010"/></g>
<g id="l10"><path d="M4 7l7 2 6-5-1 8 4 6-7-1-6 4 1-7z" fill="none" stroke="#888" stroke-dasharray="2 1"/></g>
<g id="l11"><path d="M4 5l9 4 5-5-1 9 3 7-8-4-8 3 2-8z" fill="none" stroke="#d81010"/><circle cx="4" cy="5" r="1.600" fill="#d81010"/><circle cx="18" cy="4" r="1.600" fill="#d81010"/><circle cx="17" cy="13" r="1.600" fill="#d81010"/><circle cx="12" cy="16" r="1.600" fill="#d81010"/><path d="M9 7v8" stroke="#222"/></g>
<g id="l12"><path d="M3 20L13 5l6 9M8 12l7 5" stroke="#888" fill="none"/><circle cx="3" cy="20" r="1.600" fill="#d81010"/><circle cx="13" cy="5" r="1.600" fill="#d81010"/></g>
<g id="dg"><path d="M2 4h18M2 8h18M2 12h18M2 16h18M2 20h18" stroke="#888" stroke-dasharray="1 1"/></g>
<g id="de"><use href="#dg"/><use href="#ey" transform="translate(-3 -1)"/></g>
<g id="ds2"><path d="M3 20h16M3 4v16" stroke="#888" stroke-dasharray="1 1"/><use href="#wn" transform="translate(-2 0)"/><use href="#st" transform="translate(2 2)"/></g>
<g id="de2"><path d="M3 3v18h17v-18z" fill="none" stroke="#345" stroke-dasharray="1 1"/><use href="#ey" transform="translate(-2 -1)"/></g>
<g id="lc"><path d="M4 3v16h16M4 15h5v4" stroke="#444" fill="none"/></g>
<g id="mg"><use href="#dg"/><path d="M10 14V9a5 5 0 0 1 10 0v5" fill="none" stroke="#778" stroke-width="3"/><rect x="8" y="14" width="4" height="3" fill="#d81010"/><rect x="18" y="14" width="4" height="3" fill="#1040d0"/></g>
<g id="mn"><path d="M5 15V10a6 6 0 0 1 12 0v5" fill="none" stroke="#667" stroke-width="3.200"/><rect x="3" y="15" width="4" height="4" fill="#d81010"/><rect x="15" y="15" width="4" height="4" fill="#1040d0"/></g>
<g id="so"><rect x="5" y="5" width="12" height="12" fill="none" stroke="#444" stroke-width="1.300"/></g>
<g id="sx"><rect x="5" y="5" width="12" height="12" fill="none" stroke="#777"/><path d="M5 5l12 12M17 5L5 17" stroke="#777"/><circle cx="11" cy="11" r="5" fill="none" stroke="#777"/></g>
<g id="sy"><rect x="4" y="4" width="14" height="14" fill="none" stroke="#666" stroke-width="1.300"/><path d="M4 4l14 14M18 4L4 18" stroke="#666"/><circle cx="11" cy="11" r="3" fill="none" stroke="#666"/></g>
<g id="ltr"><path d="M5 4v14h13M5 12h7v6" stroke="#333" fill="none" stroke-width="1.300"/></g>
<g id="d1"><path d="M5 17L15 6" stroke="#aaa" stroke-width="1.600"/><circle cx="10" cy="11" r="1.600" fill="#666"/></g>
<g id="d2"><path d="M4 15L14 5M8 18L18 8" stroke="#999" stroke-width="1.300"/></g>
<g id="d3"><path d="M4 5h14" stroke="#666" stroke-width="1.300"/><circle cx="11" cy="12" r="5.500" fill="none" stroke="#666" stroke-width="1.300"/></g>
<g id="d4"><circle cx="11" cy="11" r="7" fill="none" stroke="#888" stroke-width="1.300"/><circle cx="11" cy="11" r="4.500" fill="#ddd" stroke="#888"/></g>
<g id="d5"><path d="M6 16L16 6M8 10l6 6" stroke="#999" stroke-dasharray="2 1"/></g>
<g id="d6"><path d="M5 16L15 6M9 8l6 2M7 12l6 5" stroke="#999"/></g>
<g id="d7"><path d="M4 5l14 12M17 5L5 17" stroke="#999" stroke-dasharray="2 2"/><circle cx="8" cy="8" r="1.500" fill="#c66"/></g>
<g id="d8"><path d="M5 16l3-3 3-3 3-3 3-3M7 8l2 2M13 14l2 2" stroke="#999" stroke-dasharray="1 2"/></g>
<g id="e1"><rect x="4" y="4" width="14" height="14" fill="none" stroke="#666" stroke-dasharray="1 1"/><path d="M7 8h8M7 11h8M7 14h8M9 4v14M13 4v14" stroke="#888" stroke-dasharray="1 1"/></g>
<g id="e2"><rect x="4" y="4" width="14" height="14" fill="none" stroke="#444" stroke-dasharray="1 1"/></g>
<g id="e3"><path d="M3 14l5-4h11l-5 4zM3 11l5-4h11l-5 4zM3 14v3h11l5-4v-3" fill="#ddd" stroke="#555"/></g>
<g id="e4"><path d="M4 8v6M18 8v6" stroke="#d81010" stroke-width="1.500"/><rect x="5" y="10" width="12" height="2.500" fill="#2040a0"/></g>
<g id="e5"><path d="M11 3v8" stroke="#444"/><path d="M8 7h6" stroke="#444"/><rect x="8" y="13" width="6" height="6" fill="#fff" stroke="#444"/></g>
<!-- tree -->
<g id="cb0"><rect x="-6.500" y="-6.500" width="13" height="13" fill="#fff" stroke="#333"/></g>
<g id="cb1"><use href="#cb0"/><path d="M-4-.5l3 3 5-6" fill="none" stroke="#333" stroke-width="1.100"/></g>
<g id="cbp"><rect x="-6.500" y="-6.500" width="13" height="13" fill="#cce4f7" stroke="#0a5a9e"/></g>
<g id="ro"><circle r="6" fill="#fff" stroke="#333"/></g>
<g id="ra"><use href="#ro"/><circle r="3.300" fill="#333"/></g>
<g id="cr"><path d="M-2-4l4 4-4 4" fill="none" stroke="#888" stroke-width="1.300"/></g>
<g id="cd"><path d="M-4-2l4 4 4-4" fill="none" stroke="#222" stroke-width="1.500"/></g>
<g id="tf"><path d="M1 3h11M2.500 3v11M11 3v11" stroke="#222" stroke-width="1.300" fill="none"/><circle cx="2.500" cy="3" r="1.400" fill="#d81010"/><circle cx="11" cy="3" r="1.400" fill="#d81010"/><circle cx="2.500" cy="14" r="1.400" fill="#d81010"/><circle cx="11" cy="14" r="1.400" fill="#d81010"/><circle cx="13" cy="2" r="2" fill="#bbb"/></g>
<g id="ts"><rect x="0" y="1" width="9" height="4" fill="#7aa6e0"/><rect x="10" y="6" width="6" height="5" fill="#f018e0"/><rect x="0" y="11" width="9" height="4" fill="#2ea84c"/><path d="M9 3c5 0 5 3 5 3M9 13c4 0 5-2 5-2" fill="none" stroke="#333" stroke-width="1.300"/></g>
<g id="tz"><path d="M0 10l16-5v4L0 12z" fill="url(#wg)"/><path d="M0 10l16-5" stroke="#222"/><path d="M10 15h5M12.500 12.500v5" stroke="#111"/></g>
<g id="te"><path d="M6 0l3 0-2 16z" fill="url(#rbw)"/><path d="M7 0h3v5" stroke="#222" fill="none"/></g>
<g id="tw"><path d="M0 13l16-4v3L0 15z" fill="url(#wg)"/><path d="M0 13l16-4" stroke="#222"/><ellipse cx="11" cy="4.500" rx="5" ry="3.500" fill="#34498f"/><circle cx="11" cy="4.500" r="1.400" fill="#cfe0ff"/></g>
<g id="tq"><rect width="16" height="16" fill="#2040e0"/><path d="M16 0a16 16 0 0 0-16 16h16z" fill="#10c8e0"/><path d="M16 3a13 13 0 0 0-13 13h13z" fill="#10c040"/><path d="M16 6.500a9.500 9.500 0 0 0-9.500 9.500H16z" fill="#e8e000"/><path d="M16 10a6 6 0 0 0-6 6h6z" fill="#e88000"/><path d="M16 13a3 3 0 0 0-3 3h3z" fill="#e01010"/><path d="M0 0h5L0 5z" fill="#1030c0"/></g>
<g id="tp"><rect width="16" height="16" fill="#fff" stroke="#bbb" stroke-width=".5"/><path d="M0 1l16 15H0z" fill="#2040e0"/><path d="M0 1l13 15H6L0 9z" fill="#10c040"/><path d="M0 1l9 11H6L0 6z" fill="#e8e000"/><path d="M0 1l5 7H3L0 4z" fill="#e01010"/><path d="M9 8l6-7 2 2-6 7z" fill="#f0b060"/></g>
<g id="tn"><rect width="16" height="16" fill="#fff" stroke="#bbb" stroke-width=".5"/><path d="M1 2l13 14M1 6l9 10M1 10l5 6" stroke="#2040e0" fill="none"/><path d="M4 2l10 12" stroke="#e01010"/><path d="M2 2l11 14" stroke="#10c040"/><path d="M9 8l6-7 2 2-6 7z" fill="#f0b060"/></g>
<g id="tv"><rect width="16" height="16" fill="#5088d0"/><circle cx="8" cy="8" r="6" fill="#e8c020"/><path d="M9 8l6-7 2 2-6 7z" fill="#f0b060"/></g>
</defs>

<!-- chrome icons -->
<path d="M1389 15h16" stroke="#fff"/><rect x="1437.500" y="10.500" width="9" height="9" fill="none" stroke="#fff"/><path d="M1483 10l10 10M1493 10l-10 10" stroke="#fff"/>
<path d="M19 8l4-3 3 2-3 4z" fill="#a0a8b0"/><circle cx="15" cy="17" r="6.500" fill="#f0c020" stroke="#554a10"/><text x="11.500" y="21" font-size="11" font-weight="bold" fill="#222">6</text>
<rect x="0" y="35" width="17" height="12" fill="#20407e"/><path d="M0 44h17M2 44l6-6 7 6M8 38v6" stroke="#d8e0f0" fill="none" stroke-width=".8"/>
<path d="M859 36l5 4-5 4z" fill="#888"/>
<path d="M1123 36h9M1123 40h7M1123 44h9" stroke="#777"/><circle cx="1135" cy="38" r="3" fill="none" stroke="#777"/><path d="M1137 40l2 2" stroke="#777"/>
<path d="M1462 43h7" stroke="#444" stroke-width="2"/><rect x="1481.500" y="38.500" width="7" height="6" fill="none" stroke="#333"/><rect x="1484" y="36.500" width="6" height="5" fill="none" stroke="#333"/><path d="M1499 37l7 7M1506 37l-7 7" stroke="#222" stroke-width="1.600"/>
<!-- panel header icons -->
<g fill="none" stroke="#333"><rect x="312.500" y="116.500" width="7" height="6"/><rect x="315" y="114.500" width="6" height="5"/><rect x="1474.500" y="116.500" width="7" height="6"/><rect x="1477" y="114.500" width="6" height="5"/><rect x="1474.500" y="838.500" width="7" height="6"/><rect x="1477" y="836.500" width="6" height="5"/></g>
<g stroke="#333" stroke-width="1.600"><path d="M333 114l7 7M340 114l-7 7M1495 114l7 7M1502 114l-7 7M1495 836l7 7M1502 836l-7 7"/></g>

<!-- active bg -->
<g fill="#cce4f7" stroke="#8fc4ee">
<rect x="347.500" y="53.500" width="24" height="23" rx="3"/><rect x="373.500" y="53.500" width="24" height="23" rx="3"/><rect x="425.500" y="53.500" width="24" height="23" rx="3"/><rect x="1228.500" y="53.500" width="24" height="23" rx="3"/>
<rect x="1314.500" y="81.500" width="24" height="23" rx="3"/>
<rect x="909.500" y="872.500" width="24" height="23" rx="3"/><rect x="934.500" y="872.500" width="24" height="23" rx="3"/><rect x="963.500" y="872.500" width="24" height="23" rx="3"/><rect x="1075.500" y="872.500" width="24" height="23" rx="3"/><rect x="1107.500" y="872.500" width="24" height="23" rx="3"/>
<g id="ba"><rect x="931.500" y="1093.500" width="22" height="21" rx="3"/><rect x="986.500" y="1093.500" width="22" height="21" rx="3"/><rect x="1054.500" y="1093.500" width="22" height="21" rx="3"/><rect x="1079.500" y="1093.500" width="22" height="21" rx="3"/><rect x="1102.500" y="1093.500" width="22" height="21" rx="3"/><rect x="1126.500" y="1093.500" width="22" height="21" rx="3"/><rect x="1174.500" y="1093.500" width="22" height="21" rx="3"/><rect x="1390.500" y="1093.500" width="22" height="21" rx="3"/><rect x="1414.500" y="1093.500" width="22" height="21" rx="3"/><rect x="1438.500" y="1093.500" width="22" height="21" rx="3"/><rect x="1462.500" y="1093.500" width="22" height="21" rx="3"/><rect x="1486.500" y="1093.500" width="22" height="21" rx="3"/></g>
</g>

<!-- separators -->
<g stroke="#aaa">
<path d="M259.500 56v18M342.500 56v18M582.500 53v25M657.500 53v25M1283.500 56v18M1351.500 53v25M153.500 84v18M238.500 84v18M423.500 84v18M468.500 84v18M692.500 84v18M777.500 84v18M914.500 84v18M1155.500 84v18M1341.500 84v18M653.500 81v26M1199.500 81v26M1461.500 81v26"/>
<path d="M590.500 875v18M903.500 875v18M1018.500 875v18M1103.500 875v18M1135.500 875v18M1244.500 875v18M1304.500 875v18M1336.500 875v18M1368.500 873v23M961.500 873v23"/>
<path d="M163.500 1095v18M289.500 1095v18M453.500 1095v18M536.500 1095v18M838.500 1095v18"/>
</g>
<g stroke="#999" stroke-dasharray="1 2"><path d="M6.500 56v18M6.500 84v18M587.500 56v18M662.500 56v18M1357.500 56v18M659.500 84v18M1204.500 84v18M1466.500 84v18"/></g>

<!-- row 1 -->
<g transform="translate(-11,54)">
<use href="#nd" x="23"/><use href="#fo" x="49"/><use href="#cc" x="74"/><use href="#cb" x="101"/><use href="#hb" x="127"/><use href="#fl" x="153"/><use href="#pt" x="179"/><use href="#ar" x="198"/><use href="#ds" x="217"/><use href="#dc" x="244"/><use href="#un" x="275"/><use href="#ar" x="294"/><use href="#re" x="315"/><use href="#ag" x="333"/><use href="#tl" x="359"/><use href="#tg" x="385"/><use href="#ch" x="411"/><use href="#tc" x="437"/><use href="#co" x="463"/><use href="#sc" x="489"/><use href="#ly" x="516"/><use href="#dl" x="541"/><use href="#hd" x="567"/><use href="#yp" x="604"/><use href="#ar" x="622"/><use href="#yb" x="642"/><use href="#la" x="679"/><use href="#lb" x="706"/>
<use href="#fx" x="1035"/><use href="#ar" x="1052"/><use href="#ge" x="1073"/><use href="#gx" x="1099"/><use href="#eb" x="1124"/><use href="#xb" x="1150"/><use href="#gc" x="1175"/><use href="#tb" x="1201"/><use href="#ar" x="1220"/><use href="#rb" x="1240"/><use href="#xw" x="1266"/><use href="#wg2" x="1299"/><use href="#ab" x="1325"/><use href="#ar" x="1344"/><use href="#hs" x="1374"/><use href="#mx" x="1400"/><use href="#cu" x="1426"/><use href="#cp" x="1453"/><use href="#c2" x="1478"/>
</g>
<path d="M997 61v8l-4-4zM1012 61v8l4-4z" fill="#222"/>
<path d="M975 62l5 5 5-5" fill="none" stroke="#666"/>
<text x="1501" y="69" font-size="11" fill="#666">»</text><text x="1451" y="97" font-size="11" fill="#666">»</text><text x="1501" y="97" font-size="11" fill="#666">»</text>
<text x="762" y="69" font-size="11" fill="#fff">G</text>

<!-- row 2 -->
<g transform="translate(-11,81)">
<use href="#rd1" x="20"/><use href="#ar" x="41"/><use href="#sl" x="60"/><use href="#si" x="87"/><use href="#ar" x="105"/><use href="#sp" x="125"/><use href="#ar" x="143"/><use href="#n1" x="168"/><use href="#n2" x="195"/><use href="#n3" x="222"/><use href="#sq" x="255"/><use href="#ar" x="273"/><use href="#sh" x="293"/><use href="#ar" x="311"/><use href="#sf" x="331"/><use href="#ar" x="349"/><use href="#sb" x="368"/><use href="#ar" x="387"/><use href="#gb" x="408"/><use href="#gk" x="438"/><use href="#ag" x="458"/><use href="#sk" x="482"/><use href="#fl1" x="510"/><use href="#fl2" x="536"/><use href="#fl3" x="562"/><use href="#gi" x="589"/><use href="#ar" x="607"/><use href="#gs" x="626"/><use href="#ar" x="646"/><use href="#fw" x="676"/><use href="#cw" x="709"/><use href="#rf" x="735"/><use href="#fm" x="761"/><use href="#mm" x="794"/><use href="#gf" x="819"/><use href="#gy" x="846"/><use href="#gu" x="872"/><use href="#gl" x="899"/><use href="#bm" x="931"/><use href="#bd" x="957"/><use href="#bd" x="983"/><use href="#be" x="1009"/><use href="#be" x="1035"/><use href="#bu" x="1061"/><use href="#bg" x="1086"/><use href="#lo" x="1113"/><use href="#pk" x="1138"/><use href="#rw" x="1171"/><use href="#ar" x="1190"/><use href="#gd" x="1221"/><use href="#cg" x="1246"/><use href="#pl" x="1273"/><use href="#pr" x="1299"/><use href="#pl" x="1326"/><use href="#nl" x="1358"/><use href="#rt" x="1384"/><use href="#mr" x="1410"/><use href="#st3" x="1483"/>
</g>

<!-- nav combos -->
<g transform="translate(11,133)"><path d="M0 6l7-3 5 2v11l-6 3-6-3z" fill="#f0b860"/><path d="M0 6l6 3 6-4M6 9v10" stroke="#b07830" fill="none"/><path d="M0 6l6 3v10l-6-3z" fill="#e89030"/></g>
<g transform="translate(360,873)"><path d="M0 6l7-3 5 2v11l-6 3-6-3z" fill="#f0b860"/><path d="M0 6l6 3v10l-6-3z" fill="#e89030"/></g>
<g transform="translate(602,873)"><path d="M2 16L13 4" stroke="#9db4dc" stroke-width="3"/><circle cx="13" cy="4" r="1.600" fill="#d81010"/><circle cx="2" cy="16" r="1.600" fill="#d81010"/><path d="M9 14h6M12 14v6M9 20h6" stroke="#444"/></g>
<path d="M299 142l5 5 5-5M541 881l5 5 5-5M854 881l5 5 5-5M145 1102l5 5 5-5" fill="none" stroke="#666"/>
<path d="M323 140v8l-4-4zM334 140v8l4-4" fill="#222"/>
<path d="M566 880v8l-4-4zM578 880v8l4-4zM879 880v8l-4-4zM891 880v8l4-4z" fill="#222"/>

<!-- results toolbar -->
<g transform="translate(-11,873)">
<use href="#rx1" x="921"/><use href="#rx2" x="946"/><use href="#rb" x="975"/><use href="#xw" x="1000"/><use href="#t1" x="1034"/><use href="#t2" x="1060"/><use href="#t3" x="1087"/><use href="#gn" x="1119"/><use href="#xl" x="1152"/><use href="#ar" x="1170"/><use href="#xl" x="1190"/><use href="#ar" x="1208"/><use href="#xg" x="1229"/><use href="#fw" x="1260"/><use href="#nu" x="1287"/><use href="#xc" x="1320"/><use href="#qm" x="1353"/><use href="#i1" x="1382"/><use href="#i2" x="1408"/><use href="#i3" x="1434"/><use href="#i4" x="1460"/>
</g>
<text x="1501" y="889" font-size="11" fill="#666">»</text>

<!-- bottom toolbar -->
<g transform="translate(-11,1093)">
<use href="#ax" x="13"/><use href="#b1" x="177"/><use href="#b2" x="202"/><use href="#b3" x="225"/><use href="#b4" x="250"/><use href="#b5" x="273"/><use href="#b6" x="305"/><use href="#b7" x="330"/><use href="#b8" x="354"/><use href="#ar" x="370"/><use href="#b9" x="387"/><use href="#b10" x="412"/><use href="#b11" x="436"/><use href="#b12" x="466"/><use href="#ar" x="486"/><use href="#b13" x="503"/><use href="#ar" x="521"/><use href="#l1" x="546"/><use href="#l2" x="570"/><use href="#l3" x="594"/><use href="#ar" x="612"/><use href="#l4" x="632"/><use href="#l5" x="655"/><use href="#l6" x="679"/><use href="#l7" x="703"/><use href="#l8" x="727"/><use href="#l9" x="751"/><use href="#l10" x="775"/><use href="#l11" x="799"/><use href="#l12" x="822"/><use href="#de" x="886"/><use href="#ds2" x="918"/><use href="#de" x="943"/><use href="#ds2" x="972"/><use href="#de2" x="998"/><use href="#lc" x="1034"/><use href="#mg" x="1065"/><use href="#mn" x="1090"/><use href="#so" x="1113"/><use href="#sx" x="1137"/><use href="#sy" x="1161"/><use href="#ltr" x="1185"/><use href="#d1" x="1208"/><use href="#d2" x="1232"/><use href="#d3" x="1256"/><use href="#d4" x="1280"/><use href="#d5" x="1305"/><use href="#d6" x="1328"/><use href="#d7" x="1352"/><use href="#d8" x="1375"/><use href="#e1" x="1401"/><use href="#e2" x="1425"/><use href="#e3" x="1449"/><use href="#e4" x="1473"/><use href="#e5" x="1497"/>
</g>
<text x="847" y="1108" font-size="11" fill="#666">»</text>
<path d="M1505 1130h1M1508 1130h1M1508 1127h1" stroke="#999"/>

<!-- tree 1 -->
<use href="#cr" x="14" y="174"/><use href="#cbp" x="32" y="173"/><use href="#ts" x="44" y="165"/>
<use href="#cd" x="14" y="192"/><use href="#cb0" x="32" y="191"/><use href="#tf" x="44" y="183"/>
<use href="#cr" x="34" y="210"/><use href="#cb0" x="52" y="209"/><use href="#tf" x="64" y="201"/>
<use href="#cd" x="14" y="228"/><use href="#cb1" x="32" y="227"/><use href="#tz" x="43" y="219"/>
<use href="#cd" x="34" y="246"/><use href="#cb1" x="52" y="245"/><use href="#te" x="64" y="237"/>
<use href="#ra" x="72" y="263"/><use href="#tf" x="84" y="255"/>
<use href="#ro" x="72" y="281"/><use href="#tf" x="84" y="273"/>
<use href="#ro" x="72" y="299"/><use href="#tf" x="84" y="291"/>
<!-- tree 2 -->
<use href="#cb1" x="72" y="775"/><use href="#tw" x="83" y="767"/>
<use href="#cb1" x="72" y="793"/><use href="#tw" x="83" y="785"/>
<use href="#cr" x="34" y="812"/><use href="#ra" x="52" y="811"/><use href="#tw" x="63" y="803"/>
<use href="#ro" x="52" y="829"/><use href="#tw" x="63" y="821"/>
<use href="#cb0" x="52" y="847"/><use href="#tw" x="63" y="839"/>
<use href="#cb0" x="52" y="865"/><use href="#tw" x="63" y="857"/>
<use href="#cb0" x="52" y="883"/><use href="#tw" x="63" y="875"/>
<use href="#cb0" x="52" y="901"/><use href="#tw" x="63" y="893"/>
<use href="#cb1" x="52" y="919"/><use href="#tw" x="63" y="911"/>
<use href="#cd" x="14" y="938"/><use href="#cbp" x="32" y="937"/><use href="#tq" x="43" y="929"/>
<use href="#cd" x="34" y="956"/><use href="#ra" x="52" y="955"/><use href="#tp" x="63" y="947"/>
<use href="#cb0" x="72" y="973"/><use href="#tp" x="83" y="965"/>
<use href="#cr" x="54" y="992"/><use href="#cb0" x="72" y="991"/><use href="#tq" x="83" y="983"/>
<use href="#cr" x="54" y="1010"/><use href="#cb1" x="72" y="1009"/><use href="#tq" x="83" y="1001"/>
<use href="#cb0" x="72" y="1027"/><use href="#tq" x="83" y="1019"/>
<use href="#cr" x="34" y="1046"/><use href="#ro" x="52" y="1045"/><use href="#tn" x="63" y="1037"/>
<use href="#ro" x="52" y="1063"/><use href="#tv" x="63" y="1055"/>
<!-- nav tabs -->
<rect x="3" y="1064" width="344" height="26" fill="#fff"/>
<rect x="3" y="1064" width="344" height="1" fill="#d8d8d8"/>
<g fill="#ececec" stroke="#c8c8d0"><rect x="3.500" y="1065.500" width="37" height="23"/><rect x="41.500" y="1065.500" width="37" height="23"/><rect x="80.500" y="1065.500" width="37" height="23"/></g>
<g transform="translate(13,1067)"><rect x="1" y="4" width="15" height="11" fill="#e8c068" stroke="#888"/><rect x="1" y="1" width="15" height="3" fill="#2b3f8c"/><path d="M8 16l7-6 2 3-5 4z" fill="#5a8ac8"/></g>
<ellipse cx="60" cy="1076" rx="7" ry="4.500" fill="#34498f"/><circle cx="60" cy="1076" r="1.800" fill="#cfe0ff"/>
<path d="M91 1071h11v10H91zM102 1074l5-3v10l-5-3z" fill="#666"/>
<path d="M129 1079l16-4v3l-16 3z" fill="url(#wg)"/><path d="M129 1079l16-4" stroke="#222"/>
<rect x="118" y="1088" width="38" height="1" fill="#fff"/>
<path d="M118 1065v24h39v-24" fill="none" stroke="#c8c8d0"/>

<!-- steuerpanel extras -->
<g fill="#fff" stroke="#666"><rect x="1312.500" y="175.500" width="8" height="8"/><rect x="1312.500" y="239.500" width="8" height="8"/></g>
<path d="M1314 179.500h5M1314 243.500h5" stroke="#333"/>
<g stroke="#999" stroke-dasharray="1 1" fill="none"><path d="M1321 179.500h6M1321 243.500h6M1316.500 184v55M1336 188v23h11M1336 195.500h11M1336 252v7h11"/></g>
<path d="M1506 191v-5l-6 5 6 5zM1506 207v-5l-6 5 6 5zM1506 255v-5l-6 5 6 5z" fill="#e00000"/>
<rect x="1305.500" y="799.500" width="38" height="23" fill="#ececec" stroke="#c8c8d0"/>
<rect x="1382.500" y="799.500" width="39" height="23" fill="#ececec" stroke="#c8c8d0"/>
<path d="M1343.500 799v25h39v-25" fill="#fff" stroke="#c8c8d0"/>
<rect x="1317" y="804" width="5" height="2.500" fill="#b00000"/><rect x="1317" y="807.500" width="5" height="2.500" fill="#f0b000"/><rect x="1317" y="811" width="5" height="2.500" fill="#10d010"/><rect x="1317" y="814" width="5" height="2.500" fill="#10a0f0"/><rect x="1317" y="817" width="5" height="2.500" fill="#000090"/>
<path d="M1324 805h7M1324 808h7M1324 811.500h7M1324 815h7M1324 818h7" stroke="#555"/>
<path d="M1362 805v11M1356 808h12M1355 817l2.500-7 2.500 7M1364 817l2.500-7 2.500 7" stroke="#555" fill="none"/><path d="M1355 817a2.500 2.500 0 0 0 5 0zM1364 817a2.500 2.500 0 0 0 5 0z" fill="#777"/>
<path d="M1393 812h5v9h-5zM1394 814h3M1394 816h3M1394 818h3" fill="#fff" stroke="#777"/><path d="M1399 804l6 14" stroke="#4a70c0" stroke-width="1.500"/><circle cx="1399" cy="804" r="1.800" fill="#d01010"/><circle cx="1405" cy="818" r="1.800" fill="#d01010"/><path d="M1401 804l3 9 1-3 3 2-1-3 2-1z" fill="#fff" stroke="#777" stroke-width=".6"/>

<!-- table glyphs -->
<g fill="#888"><path d="M535 962h8v1h-8zM535 968h8v1h-8zM537 963h4l-2 2.500zM537 968h4l-2-2.500z"/></g>
<g font-size="10" fill="#888"><text x="535" y="985">½</text><text x="535" y="1001">½</text></g>
<g stroke="#2e9a5c" stroke-width="1.800" fill="none"><path d="M768 965l3 3 6-6M768 981l3 3 6-6M768 997l3 3 6-6"/></g>

<!-- tab nav -->
<g fill="#888"><path d="M359 1076v8h1.500v-8zM365 1076v8l-4-4zM381 1076v8l-4-4zM458 1076v8l4-4z"/></g><g fill="#444"><path d="M475 1076v8l4-4zM480 1076v8h1.500v-8z"/></g>
<path d="M1492 1072v12l-6-6z" fill="#aaa"/><path d="M1501 1072v12l6-6z" fill="#111"/>

<!-- nav cube -->
<g stroke="#999" stroke-width="1.200" stroke-linejoin="round">
<path d="M1226 121l55 22-41 29-55-24z" fill="#bcbcbc"/>
<path d="M1185 148l55 24v57l-55-22z" fill="#c0c0c0"/>
<path d="M1240 172l41-29v59l-41 27z" fill="#c4c4c4"/>
</g>
<g stroke="#8a8a8a" stroke-width="1.800" fill="none">
<path d="M1216 128l55 22M1195 141l55 24M1240 126.500l-41 27.500M1267 137.500l-41 28.500"/>
<path d="M1199 154v59M1226 166v57M1185 163l55 20M1185 193l55 24"/>
<path d="M1250 165v57M1271 150v58M1240 183l41-26M1240 217l41-29"/>
</g>
<text x="0" y="0" font-size="11" font-weight="bold" fill="#3a4a9a" transform="translate(1216 151) skewX(-25) scale(1.200 .8)">+Z</text>
<text x="0" y="0" font-size="12" font-weight="bold" fill="#3aa04a" transform="translate(1207 196) skewY(20)">-Y</text>
<text x="0" y="0" font-size="12" font-weight="bold" fill="#d04040" transform="translate(1254 190) skewY(-30)">-X</text>

<!-- model -->
<g filter="url(#sf1)">
<path d="M702 363l40 13v37l-40-18z" fill="#bb5f00"/><path d="M702 363l40 13v37M702 363v30" fill="none" stroke="#ee8000" stroke-width="1.500"/>
<path d="M957 463l40 14v19l-40-11z" fill="#bb5f00"/><path d="M957 463l40 14v19M957 463v22" fill="none" stroke="#e67a00" stroke-width="1.500"/>
<g id="beam"></g>
<path d="M1207 576l5-3v33l-5 6z" fill="#8a0000"/><rect x="1207" y="604" width="4" height="4" fill="#f00000"/>
<!-- left support -->
<path d="M413 338l23 9" stroke="#e07800" stroke-width="1.300"/><path d="M413 341l22 10" stroke="#e07800" stroke-width="1.300"/>
<path d="M413.500 339.500l22 8.500" stroke="#fff" stroke-width="1"/>
<path d="M442 332l1-14 17 22-7 10-3 5-13-7z" fill="#bb5f00"/>
<path d="M413 335l20-12 9 9-4 10-3 6z" fill="#e07800"/>
<ellipse cx="443" cy="352" rx="8" ry="4.500" fill="#e07800"/>
<path d="M441 302l10 9 1 12-12 7-12-8z" fill="#bb5f00"/>
<path d="M424 316l17-14 5 5-16 13z" fill="#d06c00"/>
<circle cx="432" cy="320" r="9" fill="#e07800"/>
<!-- right support -->
<path d="M1178 638l24 12M1178 641l21 10" stroke="#e07800" stroke-width="1.300"/>
<path d="M1178.500 640l21 9" stroke="#fff" stroke-width="1"/>
<path d="M1195 635l33-18 12 13 2 6-25 14-3 5-14-5z" fill="#bb5f00"/>
<path d="M1178 637l17-9 10 12-8 8z" fill="#c86800"/>
<ellipse cx="1208" cy="653" rx="8" ry="5" fill="#d87000"/>
<path d="M1189 615l24-16 18 10-22 20-14 4z" fill="#c86800"/>
<circle cx="1222" cy="607" r="10" fill="#c86800"/>
<circle cx="1197" cy="622" r="10" fill="#e07800"/>
</g>

<!-- avatar -->
<clipPath id="av"><circle cx="1451" cy="1056" r="24.500"/></clipPath>
<rect x="1426" y="1031" width="50" height="50" fill="#e7e7f1" clip-path="url(#av)"/>
<g clip-path="url(#av)"><g filter="url(#sf1)">
<path d="M1436 1082c1-9 8-10 15-10s14 2 15 10z" fill="#4f7fb0"/>
<path d="M1447 1068h8l2 7-6 3-6-3z" fill="#d8a888"/>
<path d="M1434 1054c-3-10 6-19 17-18s18 8 16 18c0 6 2 10-2 14-3 2-5 0-6-1l-16-1c-3 3-6 3-8 1-3-4 0-9-1-13z" fill="#6b4a2e"/>
<path d="M1442 1040c-6 3-8 10-7 17M1458 1038c6 3 9 9 8 18M1448 1037c-3 4-4 8-4 12" fill="none" stroke="#a07c52" stroke-width="2.500"/>
<ellipse cx="1451" cy="1057" rx="8.500" ry="12" fill="#e2b698"/>
<path d="M1442 1050c4-3 13-3 18 0l-1 4c-5-3-11-3-16 0z" fill="#6b4a2e"/>
<rect x="1443" y="1053" width="7.500" height="6" rx="1.500" fill="#b89a88" stroke="#3a3a44" stroke-width="1.300"/><rect x="1452.500" y="1053" width="7.500" height="6" rx="1.500" fill="#b89a88" stroke="#3a3a44" stroke-width="1.300"/>
<path d="M1447 1064c2 1.500 6 1.500 8 0" stroke="#b06860" fill="none" stroke-width="1.300"/>
</g></g>
</svg>
<script>
(function(){
var O=[[443,271],[475,282],[523,302],[567,319],[600,333],[637,353],[673,373],[717,397],[760,422],[820,445],[860,461],[892,470],[927,479],[960,487],[995,497],[1047,512],[1130,540],[1190,565],[1212,573]];
var T=[[443,5],[600,5],[673,7],[820,8],[892,6],[1047,5],[1212,3]];
var B=[[443,338],[460,343],[475,347],[527,362],[607,388],[693,420],[753,443],[788,455],[820,468],[885,493],[947,519],[1010,547],[1057,567],[1113,593],[1187,630],[1207,640]];
function L(p,x){if(x<=p[0][0])return p[0][1];for(var i=1;i<p.length;i++)if(x<=p[i][0]){var a=p[i-1],b=p[i];return a[1]+(b[1]-a[1])*(x-a[0])/(b[0]-a[0]);}return p[p.length-1][1];}
var S="443,443,000090;455,455,0000c8;470,470,0000e6;474,475,00b4d8;477,477,00e0e0;488,488,00d8d0;495,495,00c896;505,505,00dc30;514,514,00e000;522,525,c8e000;527,530,e6e600;537,540,c0c000;548,552,c0b800;553,557,e8a400;605,610,e8a000;615,618,c0b400;630,632,c0c000;640,645,e0e000;650,656,80dc00;655,660,00e000;662,672,00d090;670,683,00dcdc;676,693,0050e0;680,695,0000e0;700,712,0000d8;707,720,0040e0;718,735,00c8dc;725,745,00d080;735,755,00e000;745,770,e0e000;752,778,f0c000;757,786,f00000;770,800,c00000;820,820,b00000;852,862,c00000;860,872,ee0000;868,880,c8b400;880,893,c8c800;888,908,d8d800;892,910,00e000;906,925,00d8a0;910,930,00d8d8;925,945,00a8e0;927,947,0000e0;960,977,0000e0;967,985,0040e0;975,990,00c8d8;995,1005,00d0c0;999,1010,00c070;1003,1013,00e000;1010,1023,00e000;1012,1024,e0e000;1028,1040,e0e000;1030,1042,bcbc00;1044,1056,bcb400;1047,1057,e09c00;1107,1113,e09c00;1110,1115,bcb000;1128,1132,bcb800;1129,1133,e0e000;1143,1147,e0e000;1144,1148,00e000;1158,1160,00d880;1170,1172,00d0c0;1180,1183,00d8e0;1188,1189,00a0e0;1190,1190,0000e0;1207,1207,0000b8".split(";").map(function(s){var a=s.split(",");var h=parseInt(a[2],16);return{t:+a[0],b:+a[1],c:[h>>16,(h>>8)&255,h&255]};});
var w="",u="";
function col(c,f){return "rgb("+Math.round(c[0]*f)+","+Math.round(c[1]*f)+","+Math.round(c[2]*f)+")";}
for(var i=0;i<S.length-1;i++){var a=S[i],b=S[i+1],n=Math.max(1,Math.ceil((b.t-a.t)/1.5));n=Math.max(n,Math.ceil((b.b-a.b)/1.5));
for(var k=0;k<n;k++){var f=k/n,g=(k+1)/n;
var t0=a.t+(b.t-a.t)*f,t1=a.t+(b.t-a.t)*g,b0=a.b+(b.b-a.b)*f,b1=a.b+(b.b-a.b)*g,c=[0,1,2].map(function(j){return a.c[j]+(b.c[j]-a.c[j])*f;});
var y0=L(O,t0),y1=L(O,t1),l0=y0+L(T,t0),l1=y1+L(T,t1);
var cs=col(c,1),cu=col(c,.8);
w+='<polygon points="'+t0+','+l0+' '+t1+','+l1+' '+b1+','+L(B,b1)+' '+b0+','+L(B,b0)+'" fill="'+cs+'" stroke="'+cs+'" stroke-width=".5"/>';
u+='<polygon points="'+t0+','+y0+' '+t1+','+y1+' '+t1+','+l1+' '+t0+','+l0+'" fill="'+cu+'" stroke="'+cu+'" stroke-width=".5"/>';
}}
var e=L(O,1207);u+='<polygon points="1207,'+e+' 1212,573 1207,'+(e+L(T,1207))+'" fill="#0000a0"/>';
document.getElementById("beam").innerHTML=w+u;
})();
</script>
</div></body></html>
